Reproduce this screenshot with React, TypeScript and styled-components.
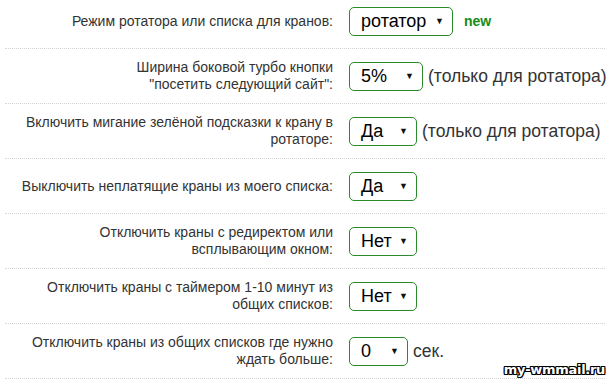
import styled, { createGlobalStyle } from 'styled-components'

const GlobalStyle = createGlobalStyle`
    body {
        margin: 0;
        background: #fff;
        font-family: "Liberation Sans", Arial, sans-serif;
    }
`

const Page = styled.div`
    width: 611px;
    height: 380px;
    overflow: hidden;
    position: relative;
`

const Settings = styled.div`
    margin: -6px 6px 0 5px;
`

const Row = styled.div`
    display: grid;
    grid-template-columns: 328px auto;
    column-gap: 16px;
    align-items: center;
    min-height: 54px;
    border-bottom: 1px dotted #d4d4d4;
`

const Label = styled.div`
    text-align: right;
    font-size: 14px;
    line-height: 17px;
    color: #333;
`

const Control = styled.div`
    display: flex;
    align-items: center;
    gap: 5px;
    white-space: nowrap;
`

const Select = styled.div<{ $w: number }>`
    box-sizing: border-box;
    width: ${p => p.$w}px;
    height: 29px;
    border: 1px solid #2b8a2b;
    border-radius: 5px;
    display: flex;
    align-items: center;
    justify-content: space-between;
    padding: 0 8px 0 11px;
    font-size: 18px;
    color: #000;
`

const Arrow = styled.span`
    font-size: 9px;
    color: #111;
`

const Note = styled.span`
    font-size: 17.5px;
    color: #333;
`

const New = styled.span`
    margin-left: 6px;
    font-size: 14px;
    font-weight: bold;
    color: #168a16;
`

const Watermark = styled.div`
    position: absolute;
    right: 6px;
    bottom: 3px;
    font-family: "DejaVu Sans", sans-serif;
    font-weight: bold;
    font-size: 13px;
    color: #fff;
    letter-spacing: -0.3px;
    text-shadow: -1px -1px 0 #000, 1px -1px 0 #000, -1px 1px 0 #000, 1px 1px 0 #000, 0 1px 0 #000, 0 -1px 0 #000, 1px 0 0 #000, -1px 0 0 #000;
`

const Dropdown = ({ value, w }: { value: string; w: number }) => (
    <Select $w={w}>
        <span>{value}</span>
        <Arrow>▼</Arrow>
    </Select>
)

const App = () => {
    return (
        <Page>
            <GlobalStyle />
            <Settings>
                <Row>
                    <Label>Режим ротатора или списка для кранов:</Label>
                    <Control>
                        <Dropdown value="ротатор" w={104} />
                        <New>new</New>
                    </Control>
                </Row>
                <Row>
                    <Label>
                        Ширина боковой турбо кнопки
                        <br />
                        "посетить следующий сайт":
                    </Label>
                    <Control>
                        <Dropdown value="5%" w={74} />
                        <Note>(только для ротатора)</Note>
                    </Control>
                </Row>
                <Row>
                    <Label>
                        Включить мигание зелёной подсказки к крану в
                        <br />
                        ротаторе:
                    </Label>
                    <Control>
                        <Dropdown value="Да" w={68} />
                        <Note>(только для ротатора)</Note>
                    </Control>
                </Row>
                <Row>
                    <Label>Выключить неплатящие краны из моего списка:</Label>
                    <Control>
                        <Dropdown value="Да" w={68} />
                    </Control>
                </Row>
                <Row>
                    <Label>
                        Отключить краны с редиректом или
                        <br />
                        всплывающим окном:
                    </Label>
                    <Control>
                        <Dropdown value="Нет" w={68} />
                    </Control>
                </Row>
                <Row>
                    <Label>
                        Отключить краны с таймером 1-10 минут из
                        <br />
                        общих списков:
                    </Label>
                    <Control>
                        <Dropdown value="Нет" w={68} />
                    </Control>
                </Row>
                <Row>
                    <Label>
                        Отключить краны из общих списков где нужно
                        <br />
                        ждать больше:
                    </Label>
                    <Control>
                        <Dropdown value="0" w={59} />
                        <Note>сек.</Note>
                    </Control>
                </Row>
            </Settings>
            <Watermark>my-wmmail.ru</Watermark>
        </Page>
    )
}

export default App
